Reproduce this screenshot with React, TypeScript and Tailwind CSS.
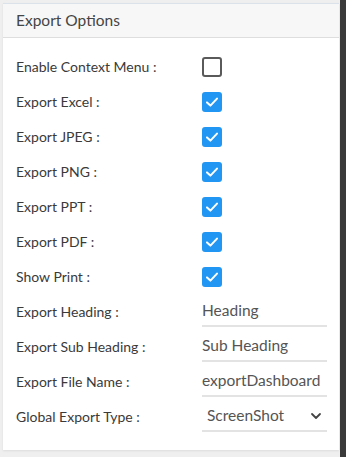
import React from "react";

const font = { fontFamily: "Lato, 'Noto Sans', sans-serif" };

function Check({ checked }: { checked: boolean }) {
  if (!checked) {
    return <div className="w-[20px] h-[20px] rounded-[3px] border-2 border-[#5a5a5a] bg-white" />;
  }
  return (
    <div className="w-[20px] h-[20px] rounded-[3px] bg-[#2196f3] flex items-center justify-center">
      <svg width="14" height="14" viewBox="0 0 14 14" fill="none">
        <path d="M2 7.4 L5.4 10.6 L12 3.6" stroke="white" strokeWidth="2" strokeLinecap="round" strokeLinejoin="round" />
      </svg>
    </div>
  );
}

function Row({ label, children }: { label: string; children: React.ReactNode }) {
  return (
    <div className="flex items-center h-[35px]">
      <div className="w-[186px] text-[14px] text-[#3a3a3a]">{label}</div>
      <div className="flex-1 flex items-center">{children}</div>
    </div>
  );
}

function Input({ value }: { value: string }) {
  return (
    <div className="w-full h-[30px] mt-[1px] border-b-2 border-[#e3e3e3] flex items-center text-[15.5px] text-[#555]">
      {value}
    </div>
  );
}

export default function App() {
  const checks: [string, boolean][] = [
    ["Enable Context Menu :", false],
    ["Export Excel :", true],
    ["Export JPEG :", true],
    ["Export PNG :", true],
    ["Export PPT :", true],
    ["Export PDF :", true],
    ["Show Print :", true],
  ];
  return (
    <div className="w-[346px] h-[457px] bg-[#efefef] flex overflow-hidden" style={font}>
      <div className="flex-1 pl-[3px] pt-[3px] pr-[1px]">
        <div className="bg-white border-t border-[#dbe2ea] h-[447px] flex flex-col shadow-[0_1px_2px_rgba(0,0,0,0.08)]">
          <div className="h-[34px] bg-[#f7f7f7] border-b border-[#dedede] flex items-center pl-[13px] text-[15.5px] text-[#454545]">
            Export Options
          </div>
          <div className="pl-[13px] pr-[12px] pt-[11px]">
            {checks.map(([l, c]) => (
              <Row key={l} label={l}>
                <Check checked={c} />
              </Row>
            ))}
            <Row label="Export Heading :">
              <Input value="Heading" />
            </Row>
            <Row label="Export Sub Heading :">
              <Input value="Sub Heading" />
            </Row>
            <Row label="Export File Name :">
              <Input value="exportDashboard" />
            </Row>
            <Row label="Global Export Type :">
              <div className="w-full h-[30px] mt-[1px] border-b-2 border-[#e3e3e3] flex items-center justify-between pl-[5px] pr-[5px] text-[15.5px] text-[#555]">
                <span>ScreenShot</span>
                <svg width="12" height="12" viewBox="0 0 12 12" fill="none">
                  <path d="M2 4 L6 8 L10 4" stroke="#444" strokeWidth="1.8" strokeLinecap="round" strokeLinejoin="round" />
                </svg>
              </div>
            </Row>
          </div>
        </div>
      </div>
      <div className="w-[6px] bg-[#3a3a3a]" />
    </div>
  );
}
